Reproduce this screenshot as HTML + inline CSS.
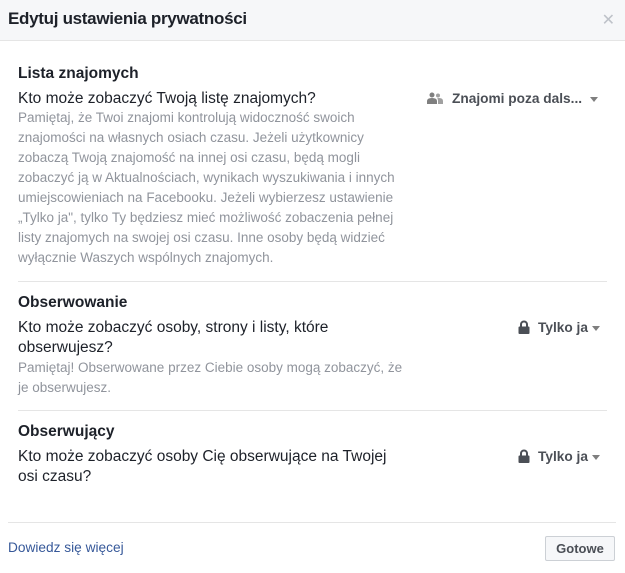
<!DOCTYPE html>
<html><head><meta charset="utf-8"><style>
*{margin:0;padding:0;box-sizing:border-box}
body{width:625px;height:573px;background:#fff;font-family:"Liberation Sans",Arial,sans-serif;position:relative;overflow:hidden;color:#1d2129}
.hdr{position:absolute;left:0;top:0;width:625px;height:41px;background:#f6f7f9;border-bottom:1px solid #e5e5e5}
.hdr .t{position:absolute;left:8px;top:9px;font-size:17px;font-weight:bold;color:#1d2129;letter-spacing:-0.3px}
.x{position:absolute;right:10px;top:10px;font-size:16px;color:#bec2c9}
.a{position:absolute;white-space:nowrap}
.h{font-size:15.5px;font-weight:bold}
.q{font-size:15.5px;line-height:20px;width:380px;white-space:normal}
.g{font-size:13.5px;line-height:20px;color:#90949c;width:388px;white-space:normal}
.hr{position:absolute;height:1px;background:#e5e5e5}
.ctl{font-size:13.7px;font-weight:bold;color:#4b4f56}
.arr{display:inline-block;width:0;height:0;border-left:4px solid transparent;border-right:4px solid transparent;border-top:5px solid #7f7f7f;vertical-align:middle;margin-left:4px}
.btn{position:absolute;left:545px;top:536px;width:70px;height:25px;border:1px solid #ccd0d5;background:#f6f7f9;border-radius:2px;font-size:13px;font-weight:bold;color:#4b4f56;text-align:center;line-height:23px}
</style></head><body>
<div class="hdr"><div class="t">Edytuj ustawienia prywatności</div><div class="x">✕</div></div>

<div class="a h" style="left:18px;top:65px">Lista znajomych</div>
<div class="a q" style="left:18px;top:89px">Kto może zobaczyć Twoją listę znajomych?</div>
<div class="a g" style="left:18px;top:108px">Pamiętaj, że Twoi znajomi kontrolują widoczność swoich znajomości na własnych osiach czasu. Jeżeli użytkownicy zobaczą Twoją znajomość na innej osi czasu, będą mogli zobaczyć ją w Aktualnościach, wynikach wyszukiwania i innych umiejscowieniach na Facebooku. Jeżeli wybierzesz ustawienie „Tylko ja", tylko Ty będziesz mieć możliwość zobaczenia pełnej listy znajomych na swojej osi czasu. Inne osoby będą widzieć wyłącznie Waszych wspólnych znajomych.</div>
<div class="a ctl" style="left:427px;top:91px"><svg width="16" height="12" style="vertical-align:-1px;margin-right:9px"><circle cx="5" cy="3" r="2.5" fill="#7f7f7f"/><path d="M0 12v-3q0-3 5-3q5 0 5 3v3z" fill="#7f7f7f"/><circle cx="11" cy="3.5" r="2" fill="#a0a0a0"/><path d="M11 12v-3q0-2-1-2.5q1-.5 2-.5q4 0 4 3v3z" fill="#a0a0a0"/></svg>Znajomi poza dals...<span class="arr" style="margin-left:8px"></span></div>
<div class="hr" style="left:18px;top:281px;width:589px"></div>

<div class="a h" style="left:18px;top:294px">Obserwowanie</div>
<div class="a q" style="left:18px;top:318px">Kto może zobaczyć osoby, strony i listy, które obserwujesz?</div>
<div class="a g" style="left:18px;top:358px">Pamiętaj! Obserwowane przez Ciebie osoby mogą zobaczyć, że je obserwujesz.</div>
<div class="a ctl" style="left:518px;top:320px"><svg width="12" height="14" style="vertical-align:-2px;margin-right:8px"><path d="M3 7V4.5a3 3 0 0 1 6 0V7" stroke="#4b4f56" stroke-width="2" fill="none"/><rect x="0.5" y="6.5" width="11" height="7.5" rx="1" fill="#4b4f56"/></svg>Tylko ja<span class="arr"></span></div>
<div class="hr" style="left:18px;top:410px;width:589px"></div>

<div class="a h" style="left:18px;top:423px">Obserwujący</div>
<div class="a q" style="left:18px;top:447px">Kto może zobaczyć osoby Cię obserwujące na Twojej osi czasu?</div>
<div class="a ctl" style="left:518px;top:449px"><svg width="12" height="14" style="vertical-align:-2px;margin-right:8px"><path d="M3 7V4.5a3 3 0 0 1 6 0V7" stroke="#4b4f56" stroke-width="2" fill="none"/><rect x="0.5" y="6.5" width="11" height="7.5" rx="1" fill="#4b4f56"/></svg>Tylko ja<span class="arr"></span></div>

<div class="hr" style="left:8px;top:522px;width:608px"></div>
<div class="a" style="left:8px;top:540px;font-size:13.7px;color:#365899">Dowiedz się więcej</div>
<div class="btn">Gotowe</div>
</body></html>
